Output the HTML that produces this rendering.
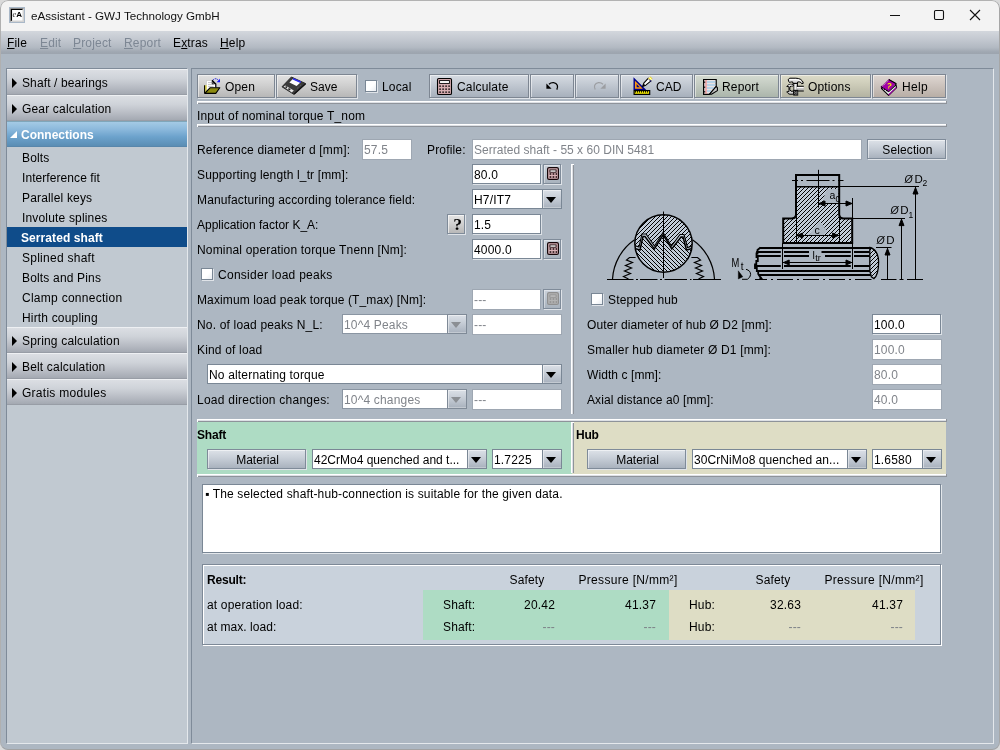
<!DOCTYPE html>
<html lang="en">
<head>
<meta charset="utf-8">
<title>eAssistant - GWJ Technology GmbH</title>
<style>
*{box-sizing:border-box;margin:0;padding:0}
html,body{width:1000px;height:750px;overflow:hidden}
body{background:#dadada;font-family:"Liberation Sans",sans-serif;font-size:12px;color:#000;position:relative}
.abs,.abs>*{position:absolute}
#win{position:absolute;left:0;top:0;width:1000px;height:750px;background:#adb7c2;border-radius:8px;overflow:hidden}
#frame{left:0;top:0;width:1000px;height:750px;border-radius:8px;border:1px solid;border-color:#b2b2b2 #a6a6a6 #a2a2a2 #b0b0b0}
#win *{position:absolute;white-space:nowrap}
#win{letter-spacing:.17px;will-change:transform}
#title{letter-spacing:0}
#title{left:0;top:0;width:1000px;height:31px;background:#f3f3f3}
#title .t{left:31px;top:9px;font-size:11.65px;color:#111}
#menu{left:0;top:31px;width:1000px;height:23px;background:linear-gradient(#d3d7dd,#c4c9d1 35%,#b2b9c2 72%,#a0a8b2 90%,#9ca4ae)}
#menu span{top:5px;font-size:12px;line-height:14px}
#menu .d{color:#7d8794}
#win u{position:static;text-decoration:underline;text-underline-offset:1px}
/* sidebar */
#side{left:6px;top:68px;width:182px;height:676px;background:#c1c9d1;border:1px solid;border-color:#7f8b99 #e4e8ec #e4e8ec #7f8b99}
.hd{left:0;width:180px;height:26px;background:linear-gradient(#dbdee3,#cfd3d9 35%,#b9bdc5 70%,#a4a9b2);border-top:1px solid #eef0f3;border-bottom:1px solid #989da6}
.hd span{left:15px;top:6px;line-height:14px}
.hd i{left:5px;top:8px;width:0;height:0;border-left:5px solid #000;border-top:5px solid transparent;border-bottom:5px solid transparent}
.hd.sel{background:linear-gradient(#a4cae5,#8cb9dc 30%,#6ca2cc 62%,#5a8db4);border-top-color:#7fa6ba;border-bottom-color:#5886ab}
.hd.sel span{color:#fff;font-weight:bold;left:14px;letter-spacing:0}
.hd.sel i{left:3px;top:9px;border:0;border-bottom:7px solid #fff;border-left:7px solid transparent}
.it{left:0;width:180px;height:20px}
.it span{left:15px;top:4px;line-height:14px}
.it.sel{background:#0f4c8a}
.it.sel span{color:#fff;font-weight:bold;left:14px;letter-spacing:.08px}
/* main panel */
#main{left:191px;top:68px;width:803px;height:676px;border:1px solid;border-color:#7f8b99 #e4e8ec #e4e8ec #7f8b99}

/* toolbar buttons */
.tb{top:74px;height:24px;border:1px solid #7d8692;box-shadow:1px 1px 0 #dfe3e8,inset 1px 1px 0 rgba(255,255,255,.5)}
.tb span{top:5px;line-height:14px}
.g0{background:linear-gradient(#e2e2e2,#d0d0d0 45%,#b7b7b7)}
.g1{background:linear-gradient(#d6dbe2,#c1c8d1 45%,#a7b0bc)}
.g2{background:linear-gradient(#d5dbd2,#c3cbc1 45%,#abb5ab)}
.g3{background:linear-gradient(#dddcc9,#cccbb8 45%,#b3b3a2)}
.g4{background:linear-gradient(#dfd7d2,#cdc4be 45%,#b8aea6)}
.lb{line-height:16px}
.cbx{width:12px;height:12px;background:linear-gradient(135deg,#fff 55%,#e9edf2);border:1px solid #7a8795;box-shadow:1px 1px 0 #dfe3e8}
.sep{height:3px;background:linear-gradient(#fff 0,#fff 1px,#dde0e5 1px,#dde0e5 2px,#8e939a 2px);border-left:1px solid #fff;border-right:1px solid #8e939a}

/* form */
.b{font-weight:bold;letter-spacing:-.2px}
.in{height:20px;background:#fff;border:1px solid #7a8795;box-shadow:1px 1px 0 #dde2e7}
.in>span{left:1px;top:3px;line-height:14px}
.in.dis{border-color:#9ea7b2;box-shadow:none;color:#80848a}
.in.dis.co{border-color:#8a95a2}
.in.co{box-shadow:none}
.ar{right:-1px;top:-1px;width:20px;height:20px;border:1px solid #7a8795;background:linear-gradient(#dbe0e7,#c6cdd6 45%,#a8b1bd);box-shadow:inset 1px 1px 0 rgba(255,255,255,.45),inset 0 -1px 0 rgba(255,255,255,.3)}
.ar i{left:3px;top:7px;width:0;height:0;border-top:6px solid #000;border-left:5px solid transparent;border-right:5px solid transparent}
.dis .ar{border-color:#7f8a97}
.dis .ar i{border-top-color:#8b8f94}
.cb{width:18px;height:20px;border:1px solid #7f8b99;background:linear-gradient(#cbd2db,#b9c2cc 50%,#a8b2bd);box-shadow:1px 1px 0 #dfe3e8,inset 1px 1px 0 rgba(255,255,255,.4)}
.ci{left:3px;top:2px}
.q{width:18px;height:20px;border:1px solid #7f8b99;background:linear-gradient(#e4e4e4,#d2d2d2 45%,#b8b8b8);box-shadow:1px 1px 0 #dfe3e8,inset 1px 1px 0 rgba(255,255,255,.6)}
.q span{left:1px;width:17px;text-align:center;top:-1px;font-family:"Liberation Serif",serif;font-weight:bold;font-size:17.5px;line-height:20px;letter-spacing:0}
.btn{border:1px solid #7f8b99;background:linear-gradient(#dde2e8,#c7ced7 45%,#a9b2be);box-shadow:1px 1px 0 #dfe3e8,inset 1px 1px 0 rgba(255,255,255,.5)}
.btn span{line-height:14px}
.vsep{width:3px;background:linear-gradient(90deg,#fff 0,#fff 1px,#dde0e5 1px,#dde0e5 2px,#8e939a 2px);border-top:1px solid #fff}
.c{text-align:center}
.r{text-align:right}
.g{color:#7d8288}
</style>
</head>
<body>
<div id="win">
 <div id="title">
  <svg style="left:9px;top:7px" width="16" height="16" viewBox="0 0 16 16"><rect x=".5" y=".5" width="15" height="15" fill="#d2d2d2" stroke="#a9b8c8"/><path d="M1.5 14.5V1.5H14.5" fill="none" stroke="#8a8a8a"/><rect x="3" y="3" width="10.5" height="10.500" fill="#fff"/><path d="M2.5 13.800V2.500H13.500" fill="none" stroke="#000" stroke-width="1.100"/><text x="3.400" y="10.300" font-family="Liberation Serif, serif" font-style="italic" font-size="8.500" fill="#333" style="position:static">e</text><text x="7.300" y="10.100" font-family="Liberation Sans, sans-serif" font-size="8" font-weight="bold" fill="#000" style="position:static">A</text></svg>
  <span class="t">eAssistant - GWJ Technology GmbH</span>
  <svg style="left:888px;top:9px" width="100" height="12" viewBox="0 0 100 12" fill="none" stroke="#111" stroke-width="1.1"><path d="M2 6.5H12"/><rect x="46.5" y="1.5" width="9" height="9" rx="1.2"/><path d="M82 1L92 11M92 1L82 11"/></svg>
 </div>
 <div id="menu">
  <span style="left:7px"><u>F</u>ile</span>
  <span class="d" style="left:40px"><u>E</u>dit</span>
  <span class="d" style="left:73px"><u>P</u>roject</span>
  <span class="d" style="left:124px"><u>R</u>eport</span>
  <span style="left:173px">E<u>x</u>tras</span>
  <span style="left:220px"><u>H</u>elp</span>
 </div>

 <div id="side">
  <div class="hd" style="top:0"><i></i><span style="letter-spacing:.11px">Shaft / bearings</span></div>
  <div class="hd" style="top:26px"><i></i><span>Gear calculation</span></div>
  <div class="hd sel" style="top:52px"><i></i><span>Connections</span></div>
  <div class="it" style="top:78px"><span>Bolts</span></div>
  <div class="it" style="top:98px"><span style="letter-spacing:.07px">Interference fit</span></div>
  <div class="it" style="top:118px"><span>Parallel keys</span></div>
  <div class="it" style="top:138px"><span>Involute splines</span></div>
  <div class="it sel" style="top:158px"><span>Serrated shaft</span></div>
  <div class="it" style="top:178px"><span style="letter-spacing:0.26px">Splined shaft</span></div>
  <div class="it" style="top:198px"><span>Bolts and Pins</span></div>
  <div class="it" style="top:218px"><span style="letter-spacing:0.27px">Clamp connection</span></div>
  <div class="it" style="top:238px"><span>Hirth coupling</span></div>
  <div class="hd" style="top:258px"><i></i><span>Spring calculation</span></div>
  <div class="hd" style="top:284px"><i></i><span>Belt calculation</span></div>
  <div class="hd" style="top:310px"><i></i><span style="letter-spacing:0.27px">Gratis modules</span></div>
 </div>

 <div id="main"></div>
 <!-- toolbar -->
 <div class="tb g0" style="left:197px;width:78px"><svg style="left:6px;top:3px" width="17" height="17" viewBox="0 0 17 17"><path d="M2.5 2.5H8L11.5 6V10H6L2.5 13.5Z" fill="#fff" stroke="#bbb" stroke-width=".5"/><path d="M4 4.600H7.500M4 6.600H9.500M4 8.600H9.500" stroke="#b4b4b4" stroke-width=".8"/><path d="M8 2.2L11.8 6V9.5" fill="none" stroke="#000" stroke-width="1.2"/><path d="M8.2 3.2V5.8H10.8Z" fill="#fff" stroke="#000" stroke-width=".9"/><path d="M.6 7.3H2.7V13.4L.6 15.2Z" fill="#e6dc50"/><path d="M2 14L6 9.8H15.8L11.800 15.4H.8Z" fill="#8c8a10" stroke="#000" stroke-width="1.1" stroke-linejoin="round"/><path d="M.6 15.3V7.2" stroke="#000" stroke-width="1.1"/><path d="M9.2 1.8C10.5 .2 13 .2 14.6 2.6" fill="none" stroke="#2020e0" stroke-width="1" stroke-dasharray="1.3 .9"/><path d="M16 .8V4.2H12.6Z" fill="#1a1aff"/></svg><span style="left:27px">Open</span></div>
 <div class="tb g0" style="left:276px;width:81px"><svg style="left:4px;top:1px" width="26" height="20" viewBox="0 0 26 20"><path d="M10.4 1L24.6 7.6L13 18.4L1 10.8Z" fill="#3c3c3c" stroke="#2a2a2a" stroke-width="1" stroke-linejoin="round"/><path d="M11.8 3L19.4 6.4L15.6 10L8.4 6.6Z" fill="#fff"/><path d="M12 2.7L19.8 6.3" stroke="#3030f0" stroke-width="1.8"/><path d="M2.6 10.6L4.4 9.4L12.8 14.6L10.8 16.4Z" fill="#e4e4e4"/><path d="M4.6 10.6L6 11.6M7.4 12.6L9.2 13.8" stroke="#222" stroke-width="1.6"/><path d="M13.2 18L24.6 7.8" stroke="#111" stroke-width="1.4"/><path d="M16 12.5L20.5 8.5" stroke="#777" stroke-width=".8" stroke-dasharray="1 1"/></svg><span style="left:33px;letter-spacing:0">Save</span></div>
 <div class="cbx" style="left:365px;top:80px"></div><span class="lb" style="left:382px;top:79px">Local</span>
 <div class="tb g1" style="left:429px;width:100px"><svg style="left:6px;top:2px" width="17" height="19" viewBox="0 0 17 19"><rect x="1.5" y="1.5" width="14" height="16" rx="1.3" fill="#d0a6aa" stroke="#000" stroke-width="1.1"/><rect x="3.6" y="3.6" width="9.8" height="2.8" fill="#fff" stroke="#000" stroke-width=".9"/><path d="M3.3 9H14M3.3 12H14M3.3 15H14" stroke="#000" stroke-width="1.5" stroke-dasharray="1.6 1.4"/><path d="M2.4 8H14.6M2.4 11H14.6M2.4 14H14.6" stroke="#e6c4c7" stroke-width=".6"/></svg><span style="left:27px">Calculate</span></div>
 <div class="tb g1" style="left:530px;width:44px"><svg style="left:14px;top:6px" width="16" height="12" viewBox="0 0 16 12"><path d="M4 3.2C6.5 .8 11 1 12.3 4.2C12.9 5.8 12.4 7.4 11.8 8.6" fill="none" stroke="#000" stroke-width="1.3"/><path d="M1.4 2.6L6.6 7.8H1.4Z" fill="#000"/></svg></div>
 <div class="tb g1" style="left:575px;width:44px"><svg style="left:15px;top:6px" width="16" height="12" viewBox="0 0 16 12"><path d="M12 3.2C9.5 .8 5 1 3.700 4.200C3.100 5.800 3.600 7.400 4.200 8.600" fill="none" stroke="#9c9ea2" stroke-width="1.2"/><path d="M14.6 2.600L9.400 7.800H14.6Z" fill="#9c9ea2"/></svg></div>
 <div class="tb g1" style="left:620px;width:73px"><svg style="left:11px;top:0px" width="22" height="21" viewBox="0 0 22 21"><path d="M2.2 4V14.4H12.6Z" fill="#ff9a10" stroke="#00008c" stroke-width="1.4" stroke-linejoin="miter"/><path d="M4.6 9V12.2H7.8Z" fill="#00008c"/><rect x="2.100" y="15.600" width="15.600" height="3.800" fill="#f4e800" stroke="#000" stroke-width="1.200"/><path d="M3.500 15.800V17.600M5.500 15.800V17.600M7.500 15.800V17.600M9.500 15.800V17.600M11.500 15.800V17.600M13.500 15.800V17.600M15.500 15.800V17.600" stroke="#000" stroke-width=".9"/><path d="M10.600 11.400L11.800 8.200L16.400 3.200L19 5.800L13.800 10.200Z" fill="#fff" stroke="#000" stroke-width="1.100" stroke-linejoin="round"/><path d="M10.300 11.700L11.600 8.600L13.300 10.300Z" fill="#000"/><path d="M16 3.400L18.200 1.400L20.400 3.600L18.600 5.800Z" fill="#f6ee20" stroke="#caa" stroke-width=".5"/><path d="M17.200 2.400L19.600 4.800" stroke="#fff" stroke-width="1"/><path d="M17.600 5.200L19.200 6.400" stroke="#00008c" stroke-width="1"/></svg><span style="left:35px;letter-spacing:0">CAD</span></div>
 <div class="tb g2" style="left:694px;width:85px"><svg style="left:7px;top:3px" width="17" height="18" viewBox="0 0 17 18"><path d="M1.600 1.500H14.200V8.500L7.400 16.300H1.600Z" fill="#e9e1e1" stroke="#000" stroke-width="1.2" stroke-linejoin="miter"/><path d="M4.600 4H13.500M4.600 7H13.500M4.600 10H11.800M4.600 13H9" stroke="#86c4ee" stroke-width="1.1"/><path d="M4 2V15.800" stroke="#f48686" stroke-width="1.1"/><path d="M2.700 3.500V5M2.700 8.500V10M2.700 13V14.500" stroke="#111" stroke-width="1"/><path d="M7.400 16.300L14.200 8.500L15.400 9.600V12.600L9.400 16.300Z" fill="#c4c4c4" stroke="#000" stroke-width="1.100" stroke-linejoin="round"/></svg><span style="left:27px">Report</span></div>
 <div class="tb g3" style="left:780px;width:91px"><svg style="left:5px;top:2px" width="20" height="20" viewBox="0 0 20 20"><path d="M2.200 2.500L3.800 1.200H9.800C13.500 1.200 16.600 2.800 17.400 6.200L15.800 6.800C14.800 4.800 13.200 4.600 11.600 5V6.400H6.800V5C5.600 4.600 4.800 5.200 3.400 5.400L2.600 4.200Z" fill="#d8d8d8" stroke="#000" stroke-width="1" stroke-linejoin="round"/><path d="M3.400 2.600H9.500C11.500 2.600 13.500 3 14.800 4" fill="none" stroke="#fff" stroke-width="1.100"/><rect x="8" y="6.400" width="3.400" height="7.200" fill="#dcdcdc" stroke="#000" stroke-width="1"/><path d="M9 7V13" stroke="#fff" stroke-width="1"/><path d="M10.800 9.500H17.800V13.800H10.800Z" fill="#b8b8b8"/><path d="M10.800 9.300H17.800M10.800 14H17.800" stroke="#000" stroke-width="1.100"/><path d="M11 10.600H17.600" stroke="#fff" stroke-width="1.200"/><path d="M.8 9.500L2 8.200C3.500 7 5.400 7.200 7.200 7.600V9H4.800L3.800 10.600V12.600L5 14.200H7.600V17.200H4C2.600 17.200 1.600 16 .8 14.800L3 14.600V9.600Z" fill="#d4d4d4" stroke="#000" stroke-width="1" stroke-linejoin="round"/><path d="M2.400 8.800C3.600 8 5 8 6.600 8.300" fill="none" stroke="#fff" stroke-width="1"/><rect x="7.200" y="12.800" width="5" height="5.800" fill="#111"/><path d="M8.200 14.700H11.600M8.200 16.300H11.600" stroke="#bbb" stroke-width=".8" stroke-dasharray=".8 .8"/><path d="M8.900 15.500H11.600M8.900 17.200H11.600" stroke="#bbb" stroke-width=".8" stroke-dasharray=".8 .8"/></svg><span style="left:27px">Options</span></div>
 <div class="tb g4" style="left:872px;width:74px"><svg style="left:7px;top:3px" width="19" height="19" viewBox="0 0 19 19"><path d="M1.600 10.600L8.600 17.400L16.600 9.600L16 6.800L8.600 13.600L1.400 8.400Z" fill="#e9ecec" stroke="#000" stroke-width="1.100" stroke-linejoin="round"/><path d="M8.600 17L16.400 9.400" stroke="#9a00a0" stroke-width="1.100"/><path d="M1.400 9.200L8.800 1.600L15.800 5.600L8.600 13.200Z" fill="#a100a6" stroke="#7a0080" stroke-width=".8" stroke-linejoin="round"/><path d="M8.800 1.400L16 5.500L15.600 7" fill="none" stroke="#000" stroke-width="1.100"/><path d="M1.800 9.400L8.400 13.600" stroke="#000" stroke-width="1.200" stroke-dasharray="1.600 1"/><path d="M2.600 8.400L8.400 2.600" stroke="#d9a0dc" stroke-width=".9" stroke-dasharray="1 1"/><text x="6.800" y="10.600" font-family="Liberation Sans" font-weight="bold" font-size="8" fill="#f6f000" transform="rotate(12 9 8)" style="position:static">?</text></svg><span style="left:29px;letter-spacing:.3px">Help</span></div>
 <div class="sep" style="left:197px;top:101px;width:750px"></div>
 <span class="lb" style="left:197px;top:108px">Input of nominal torque T_nom</span>
 <div class="sep" style="left:197px;top:124px;width:750px"></div>
 <!-- form left -->
 <span class="lb" style="left:197px;top:142px">Reference diameter d [mm]:</span>
 <div class="in dis" style="left:362px;top:139px;width:50px;height:21px"><span>57.5</span></div>
 <span class="lb" style="left:427px;top:142px">Profile:</span>
 <div class="in dis" style="left:472px;top:139px;width:390px;height:21px"><span style="letter-spacing:0.02px">Serrated shaft - 55 x 60 DIN 5481</span></div>
 <div class="btn" style="left:867px;top:139px;width:79px;height:20px"><span style="left:1px;width:77px;text-align:center;top:3px;letter-spacing:.1px">Selection</span></div>

 <span class="lb" style="left:197px;top:167px;letter-spacing:0.145px">Supporting length l_tr [mm]:</span>
 <div class="in" style="left:472px;top:164px;width:69px"><span>80.0</span></div>
 <div class="cb" style="left:543px;top:164px"><svg class="ci" width="12" height="13" viewBox="0 0 12 13"><rect x=".6" y=".6" width="10.800" height="11.800" rx="1.500" fill="#dab2b7" stroke="#160608" stroke-width="1.200"/><rect x="2.900" y="2.900" width="6.200" height="2.300" fill="#fff" stroke="#160608" stroke-width=".9"/><path d="M2.600 7H10M2.600 10H10" stroke="#160608" stroke-width="1.700" stroke-dasharray="1.700 1.300"/></svg></div>

 <span class="lb" style="left:197px;top:192px;letter-spacing:0.135px">Manufacturing according tolerance field:</span>
 <div class="in co" style="left:472px;top:189px;width:90px"><span>H7/IT7</span><div class="ar"><i></i></div></div>

 <span class="lb" style="left:197px;top:217px;letter-spacing:0px">Application factor K_A:</span>
 <div class="q" style="left:447px;top:214px"><span>?</span></div>
 <div class="in" style="left:472px;top:214px;width:69px"><span>1.5</span></div>

 <span class="lb" style="left:197px;top:242px">Nominal operation torque Tnenn [Nm]:</span>
 <div class="in" style="left:472px;top:239px;width:69px"><span>4000.0</span></div>
 <div class="cb" style="left:543px;top:239px"><svg class="ci" width="12" height="13" viewBox="0 0 12 13"><rect x=".6" y=".6" width="10.800" height="11.800" rx="1.500" fill="#dab2b7" stroke="#160608" stroke-width="1.200"/><rect x="2.900" y="2.900" width="6.200" height="2.300" fill="#fff" stroke="#160608" stroke-width=".9"/><path d="M2.600 7H10M2.600 10H10" stroke="#160608" stroke-width="1.700" stroke-dasharray="1.700 1.300"/></svg></div>

 <div class="cbx" style="left:201px;top:268px"></div><span class="lb" style="left:218px;top:267px;letter-spacing:0.27px">Consider load peaks</span>

 <span class="lb" style="left:197px;top:292px;letter-spacing:0.115px">Maximum load peak torque (T_max) [Nm]:</span>
 <div class="in dis" style="left:472px;top:289px;width:69px;height:21px"><span>---</span></div>
 <div class="cb" style="left:543px;top:289px"><svg class="ci" width="12" height="13" viewBox="0 0 12 13"><rect x=".6" y=".6" width="10.800" height="11.800" rx="1.500" fill="#b3b3b3" stroke="#8f8f8f" stroke-width="1.200"/><rect x="2.900" y="2.900" width="6.200" height="2.300" fill="#c4c4c4" stroke="#8f8f8f" stroke-width=".9"/><path d="M2.600 7H10M2.600 10H10" stroke="#8f8f8f" stroke-width="1.700" stroke-dasharray="1.700 1.300"/></svg></div>

 <span class="lb" style="left:197px;top:317px">No. of load peaks N_L:</span>
 <div class="in dis co" style="left:342px;top:314px;width:125px"><span>10^4 Peaks</span><div class="ar"><i></i></div></div>
 <div class="in dis" style="left:472px;top:314px;width:90px;height:21px"><span>---</span></div>

 <span class="lb" style="left:197px;top:342px">Kind of load</span>
 <div class="in co" style="left:207px;top:364px;width:355px"><span>No alternating torque</span><div class="ar"><i></i></div></div>

 <span class="lb" style="left:197px;top:392px;letter-spacing:0.24px">Load direction changes:</span>
 <div class="in dis co" style="left:342px;top:389px;width:125px"><span>10^4 changes</span><div class="ar"><i></i></div></div>
 <div class="in dis" style="left:472px;top:389px;width:90px;height:21px"><span>---</span></div>

 <div class="vsep" style="left:571px;top:164px;height:250px"></div>

 <!-- form right -->
<!--DRAW0-->
 <svg style="left:600px;top:165px" width="340" height="125" viewBox="600 165 340 125" font-family="Liberation Sans, sans-serif" fill="none" stroke="#000">
  <defs>
   <pattern id="h1" patternUnits="userSpaceOnUse" width="4" height="4"><rect width="4" height="4" fill="#c8d2de" stroke="none"/><path d="M1 0h1v1h-1zM0 1h1v1h-1zM3 2h1v1h-1zM2 3h1v1h-1z" fill="#b7c2ce" stroke="none"/><path d="M0 3h1v1h-1zM1 2h1v1h-1zM2 1h1v1h-1zM3 0h1v1h-1z" fill="#000" stroke="none"/></pattern>
   <pattern id="h3" patternUnits="userSpaceOnUse" width="4" height="4"><rect width="4" height="4" fill="#c8d2de" stroke="none"/><path d="M1 0h1v1h-1zM0 1h1v1h-1zM3 2h1v1h-1zM2 3h1v1h-1z" fill="#b7c2ce" stroke="none"/><path d="M0 3h1v1h-1zM1 2h1v1h-1zM2 1h1v1h-1zM3 0h1v1h-1z" fill="#000" stroke="none"/></pattern>
   <pattern id="h4" patternUnits="userSpaceOnUse" width="4" height="4"><rect width="4" height="4" fill="#c8d2de" stroke="none"/><path d="M2 0h1v1h-1zM3 1h1v1h-1zM0 2h1v1h-1zM1 3h1v1h-1z" fill="#b7c2ce" stroke="none"/><path d="M0 0h1v1h-1zM1 1h1v1h-1zM2 2h1v1h-1zM3 3h1v1h-1z" fill="#000" stroke="none"/></pattern>
   <clipPath id="cc"><circle cx="663.5" cy="243.5" r="28.6"/></clipPath>
  </defs>
  <!-- left figure -->
  <path d="M612.500 279A51 51 0 0 1 634.600 239.800" stroke-width="1.200"/>
  <path d="M714.500 279A51 51 0 0 0 692.400 239.800" stroke-width="1.200"/>
  <g clip-path="url(#cc)">
   <rect x="630" y="210" width="70" height="70" fill="#c8d2de" stroke="none"/>
   <path d="M630 244L639 247L642 234H646L654.5 246L663 232.5L671.5 246L680 234.5H684L687.5 247.5L698 244.5V200H630Z" fill="url(#h3)" stroke="none"/>
   <path d="M630 247L640 250L643 236.500H645L654.300 249L663.200 234.800L671.800 249L681 237H683L686.500 250L698 247V290H630Z" fill="url(#h4)" stroke="none"/>
   <path d="M630 244L639 247L642 234H646L654.5 246L663 232.5L671.5 246L680 234.5H684L687.5 247.5L698 244.5" stroke-width="1.100"/>
   <path d="M630 247L640 250L643 236.500H645L654.300 249L663.200 234.800L671.800 249L681 237H683L686.500 250L698 247" stroke-width="1.500"/>
  </g>
  <circle cx="663.5" cy="243.5" r="28.700" stroke-width="1.500"/>
  <path d="M663.500 211.500V278" stroke-width="1"/>
  <path d="M635.6 257.5L629.5 257.5L626.5 260L632.5 262.5L625.5 265.5L631.5 268L624.5 271L630.5 273.5L623.5 276.5L628.5 279" stroke-width="1.200"/>
  <path d="M691.4 257.5L697.5 257.5L700.5 260L694.5 262.5L701.5 265.5L695.5 268L702.5 271L696.5 273.5L703.5 276.5L698.5 279" stroke-width="1.200"/>
  <path d="M607 279.500H633.500M636 279.500H638M640 279.500H657.500M660 279.500H662M664.500 279.500H687M690 279.500H691.500M693 279.500H721" stroke-width="1"/>
  <!-- Mt -->
  <text transform="translate(731.6 267) scale(.78 1)" font-size="12" fill="#000" stroke="none" style="position:static">M</text>
  <text x="740.800" y="269.600" font-size="10" fill="#000" stroke="none" style="position:static">t</text>
  <path d="M746 269.300Q750.600 270.500 750.600 274.500Q750.600 277.200 747.400 279.300H742" stroke-width="1"/>
  <path d="M738.300 270.800V279L742.800 276.800Z" fill="#000" stroke-width=".4"/>
  <!-- hub -->
  <path d="M796.500 187H838.500V214L843 218.500H851.500V242.500H783.500V218.500H792L796.500 214Z" fill="url(#h1)" stroke="none"/>
  <path d="M827 189H838V204H823.500V198Z" fill="#adb7c2" stroke="none"/>
  <path d="M819.500 221.500L827 230.500L823 236H808Z" fill="#adb7c2" stroke="none"/>
  <path d="M791.200 218.500Q795.800 218.500 796 214.600V175H839.200V214.600Q839.400 218.500 843.600 218.500H852.200V243H783.200V218.500H791.200" stroke-width="2" stroke-linejoin="miter"/>
  <path d="M796 186.800H840" stroke-width="1.500"/><path d="M840 186.500H919" stroke-width="1"/>
  <path d="M792 180.500H798M801 180.500H803M806.500 180.500H829.500M832.500 180.500H834.500M838 180.500H843.500" stroke-width="1"/>
  <path d="M818.500 169.800V207.600" stroke-width="1"/>
  <path d="M852.500 198V269M782.500 243V269" stroke-width="1"/>
  <path d="M839.500 214V243M796.500 214V243" stroke-width="1"/>
  <path d="M818.500 203.500H852.500" stroke-width="1"/>
  <path d="M819 203.500L825 201V206ZM852 203.500L846 201V206Z" fill="#000" stroke-width="1"/>
  <path d="M796 235.500H839.200" stroke-width="1"/>
  <path d="M797 235.500L802.600 233V238ZM838.200 235.500L832.600 233V238Z" fill="#000" stroke-width="1"/>
  <text x="829.600" y="198.800" font-size="10.500" fill="#000" stroke="none" style="position:static">a</text>
  <text x="835.400" y="201.800" font-size="8.500" fill="#000" stroke="none" style="position:static">0</text>
  <text x="814.600" y="233.600" font-size="10.500" fill="#000" stroke="none" style="position:static">c</text>
  <path d="M852.500 218.500H905" stroke-width="1"/>
  <!-- shaft -->
  <path d="M760 248H870M756.200 252H780.800M784 252H809M821.500 252H850.800M854 252H869.600M757 256H780.800M784 256H809M825 256H850.800M854 256H869.600M754.400 266H780.800M784 266H850.800M854 266H869.600M756.500 271H871M758.800 275H873" stroke-width="2"/>
  <path d="M760.5 247.500L757.500 250V253.500H756.500V257H757.800V261H756.300V264.500H755V268H756.800V271H758.200V274L760.800 278" stroke-width="1.800"/>
  <path d="M759 279.500L761 276.800L763 279.500Z" fill="#000" stroke-width=".6"/>
  <path d="M782.500 262.500H852.500" stroke-width="1"/>
  <path d="M783.600 262.500L789.200 260V265ZM851.600 262.500L846 260V265Z" fill="#000" stroke-width="1"/>
  <text x="812.600" y="258.600" font-size="10.500" fill="#000" stroke="none" style="position:static">l</text>
  <text x="815.200" y="261" font-size="9" fill="#000" stroke="none" style="position:static">tr</text>
  <path d="M869.800 247.500C875 248.500 878.600 254 878.600 262C878.600 270 876.500 276.500 874 278.600L871.400 276.800L869.800 271Z" fill="url(#h1)" stroke-width="1.300"/>
  <path d="M755 279.500H767M771 279.500H773M777 279.500H793M797 279.500H799M803 279.500H819M823 279.500H825M829 279.500H845M849 279.500H851M855 279.500H871.500M881 279.500H896.500M899.500 279.500H903.500M907 279.500H923" stroke-width="1"/>
  <!-- dimension D -->
  <path d="M876 247.500H891.500M887.500 248V279.500M901.500 218.500V279.500M915.500 186.800V279.500" stroke-width="1"/>
  <path d="M887.500 248.600L890 255H885ZM901.500 219.200L904 225.600H899ZM915.500 187.600L918 194H913Z" fill="#000" stroke-width="1"/>
  <g fill="#000" stroke="none" font-size="11.500">
   <text x="886.300" y="244.400" style="position:static">D</text>
   <text x="900.200" y="214.300" style="position:static">D</text>
   <text x="914.600" y="182.600" style="position:static">D</text>
   <text x="908.400" y="218" font-size="8.500" style="position:static">1</text>
   <text x="922.400" y="186.200" font-size="8.500" style="position:static">2</text>
   <text x="876.400" y="244.300" font-size="10.500" font-style="italic" style="position:static">Ø</text>
   <text x="890.600" y="214.200" font-size="10.500" font-style="italic" style="position:static">Ø</text>
   <text x="904.600" y="182.500" font-size="10.500" font-style="italic" style="position:static">Ø</text>
  </g>
 </svg>
<!--DRAW1-->
 <div class="cbx" style="left:591px;top:293px"></div><span class="lb" style="left:608px;top:292px">Stepped hub</span>
 <span class="lb" style="left:587px;top:317px;letter-spacing:0.11px">Outer diameter of hub Ø D2 [mm]:</span>
 <div class="in" style="left:872px;top:314px;width:69px"><span>100.0</span></div>
 <span class="lb" style="left:587px;top:342px">Smaller hub diameter Ø D1 [mm]:</span>
 <div class="in dis" style="left:872px;top:339px;width:70px;height:21px"><span>100.0</span></div>
 <span class="lb" style="left:587px;top:367px;letter-spacing:0.085px">Width c [mm]:</span>
 <div class="in dis" style="left:872px;top:364px;width:70px;height:21px"><span>80.0</span></div>
 <span class="lb" style="left:587px;top:392px;letter-spacing:0.11px">Axial distance a0 [mm]:</span>
 <div class="in dis" style="left:872px;top:389px;width:70px;height:21px"><span>40.0</span></div>

 <!-- material panels -->
 <div class="sep" style="left:197px;top:419px;width:750px"></div>
 <div style="left:197px;top:422px;width:375px;height:52px;background:#aedcc4"></div>
 <div style="left:572px;top:422px;width:374px;height:52px;background:#deddc5"></div>
 <div class="vsep" style="left:571px;top:422px;height:51px"></div>
 <span class="lb b" style="left:197px;top:427px">Shaft</span>
 <div class="btn" style="left:207px;top:449px;width:99px;height:20px"><span style="left:1px;width:97px;text-align:center;top:3px;letter-spacing:0">Material</span></div>
 <div class="in co" style="left:312px;top:449px;width:175px"><span style="letter-spacing:0px">42CrMo4 quenched and t...</span><div class="ar"><i></i></div></div>
 <div class="in co" style="left:492px;top:449px;width:70px"><span>1.7225</span><div class="ar"><i></i></div></div>
 <span class="lb b" style="left:576px;top:427px">Hub</span>
 <div class="btn" style="left:587px;top:449px;width:99px;height:20px"><span style="left:1px;width:97px;text-align:center;top:3px;letter-spacing:0">Material</span></div>
 <div class="in co" style="left:692px;top:449px;width:175px"><span style="letter-spacing:0.08px">30CrNiMo8 quenched an...</span><div class="ar"><i></i></div></div>
 <div class="in co" style="left:872px;top:449px;width:70px"><span>1.6580</span><div class="ar"><i></i></div></div>
 <div class="sep" style="left:197px;top:474px;width:750px"></div>

 <!-- message area -->
 <div style="left:203px;top:485px;width:739px;height:69px;border:1px solid #e3e7eb"></div>
 <div style="left:202px;top:484px;width:739px;height:69px;background:#fff;border:1px solid #7a8795"></div>
 <span class="lb" style="left:205px;top:486px;letter-spacing:0.15px">▪ The selected shaft-hub-connection is suitable for the given data.</span>

 <!-- results -->
 <div style="left:203px;top:565px;width:739px;height:81px;border:1px solid #fff"></div>
 <div style="left:202px;top:564px;width:739px;height:81px;border:1px solid #7d8997"></div>
 <div style="left:204px;top:566px;width:736px;height:78px;background:#c9d2dc"></div>
 <div style="left:423px;top:590px;width:246px;height:50px;background:#aedcc4"></div>
 <div style="left:669px;top:590px;width:246px;height:50px;background:#deddc5"></div>
 <span class="lb b" style="left:207px;top:572px">Result:</span>
 <span class="lb c" style="left:497px;top:572px;width:60px">Safety</span>
 <span class="lb c" style="left:568px;top:572px;width:120px;letter-spacing:.32px">Pressure [N/mm²]</span>
 <span class="lb c" style="left:743px;top:572px;width:60px">Safety</span>
 <span class="lb c" style="left:814px;top:572px;width:120px;letter-spacing:.32px">Pressure [N/mm²]</span>
 <span class="lb" style="left:207px;top:597px">at operation load:</span>
 <span class="lb" style="left:443px;top:597px">Shaft:</span>
 <span class="lb r" style="left:495px;top:597px;width:60px">20.42</span>
 <span class="lb r" style="left:596px;top:597px;width:60px">41.37</span>
 <span class="lb" style="left:689px;top:597px">Hub:</span>
 <span class="lb r" style="left:741px;top:597px;width:60px">32.63</span>
 <span class="lb r" style="left:843px;top:597px;width:60px">41.37</span>
 <span class="lb" style="left:207px;top:619px;letter-spacing:0.055px">at max. load:</span>
 <span class="lb" style="left:443px;top:619px">Shaft:</span>
 <span class="lb r g" style="left:495px;top:619px;width:60px">---</span>
 <span class="lb r g" style="left:596px;top:619px;width:60px">---</span>
 <span class="lb" style="left:689px;top:619px">Hub:</span>
 <span class="lb r g" style="left:741px;top:619px;width:60px">---</span>
 <span class="lb r g" style="left:843px;top:619px;width:60px">---</span>
 <div id="frame"></div>
</div>
</body>
</html>
